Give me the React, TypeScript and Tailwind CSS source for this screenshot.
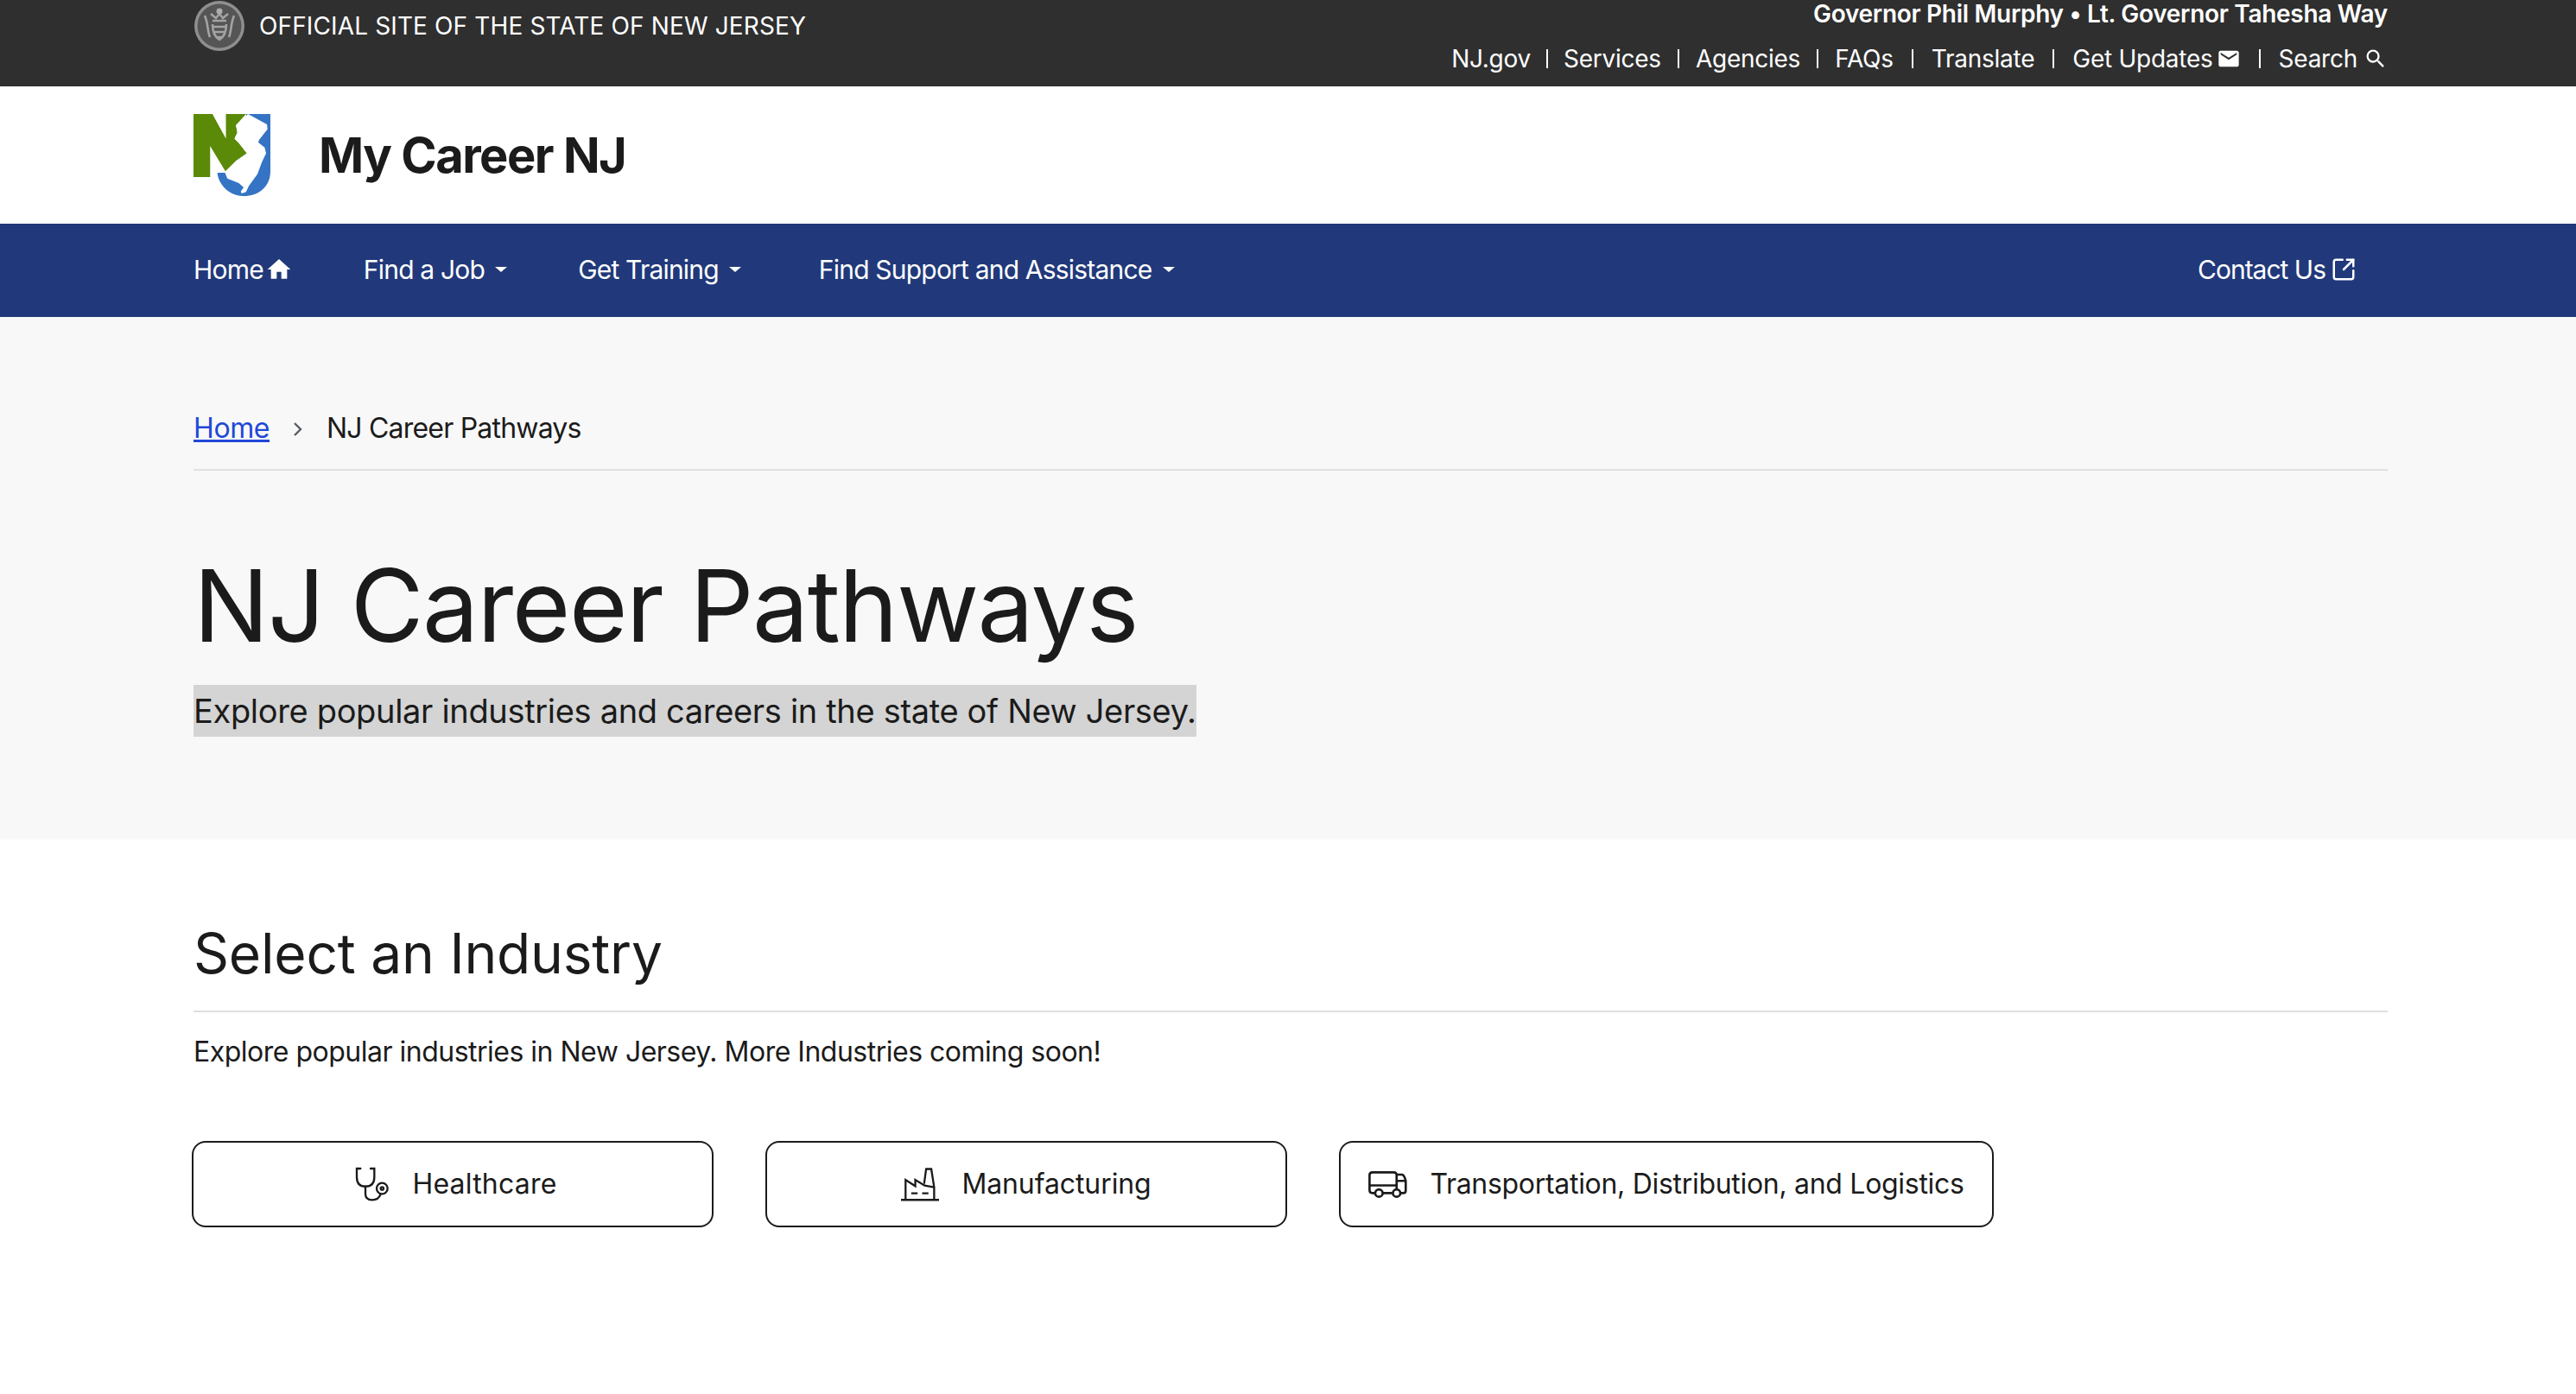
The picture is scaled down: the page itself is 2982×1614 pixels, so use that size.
import React from "react";
import { MdEmail, MdHome, MdSearch } from "react-icons/md";
import { LuSquareArrowOutUpRight } from "react-icons/lu";

const topLinks = [
  { label: "NJ.gov", sep: "mx-[18px]" },
  { label: "Services", sep: "mx-[19px]" },
  { label: "Agencies", sep: "mx-[19px]" },
  { label: "FAQs", sep: "mx-[21px]" },
  { label: "Translate", sep: "mx-[21px]" },
];

const Caret = () => (
  <span className="ml-[12px] inline-block w-0 h-0 border-x-[7px] border-x-transparent border-t-[6px] border-t-white" />
);

const Seal = () => (
  <svg viewBox="0 0 60 60" className="w-[60px] h-[60px] shrink-0">
    <defs>
      <filter id="soft">
        <feGaussianBlur stdDeviation="0.7" />
      </filter>
    </defs>
    <g filter="url(#soft)">
      <circle cx="30" cy="30" r="29" fill="#8f8f8f" />
      <circle cx="30" cy="30" r="25.5" fill="#555555" />
      <g fill="none" stroke="#a3a3a3" strokeWidth="2.6">
        <path d="M13 18c4 9 3 18 6 25M47 18c-4 9-3 18-6 25" />
        <path d="M20 16l6 5 4-5 4 5 6-5M22 24h16M23 31h14M23 37h14M26 43h8" />
        <path d="M22 28c0 10 3 15 8 18 5-3 8-8 8-18" />
      </g>
      <circle cx="30" cy="13" r="3.5" fill="#adadad" />
    </g>
  </svg>
);

const Logo = () => (
  <svg viewBox="42 37 268 277" preserveAspectRatio="none" className="w-[89px] h-[95px] shrink-0">
    <path d="M225 37H310V230C310 285 265 314 218 314C170 314 130 280 125 235H160L190 195L228 170Z" fill="#3574c4" />
    <path d="M42 37H108L155 120V37H225L190 75L195 100L185 120L200 135L228 170L190 195L153 230L100 145V250H42Z" fill="#5a8a08" />
    <path
      d="M232 37L298 72L300 88L270 125L268 133L290 150L295 170L280 200L265 240L235 280L225 300L210 305L207 298L217 285L200 270L160 255L152 235L190 195L228 170L200 135L185 120L195 100L190 75Z"
      fill="#ffffff"
    />
  </svg>
);

const Stethoscope = () => (
  <svg viewBox="36 50 120 120" fill="none" stroke="#1b1b1b" strokeWidth="7" strokeLinecap="round" className="w-[40px] h-[40px]">
    <path d="M55 56H42V85Q42 118 72 118Q103 118 103 85V56H90" />
    <path d="M72 118V143Q72 165 95 165Q118 165 125 144" />
    <circle cx="130" cy="125" r="19" />
    <circle cx="130" cy="125" r="5" />
  </svg>
);

const Factory = () => (
  <svg viewBox="42 48 133 117" fill="none" stroke="#1b1b1b" strokeWidth="7" className="w-[44px] h-[39px]">
    <path d="M42 160H175" strokeWidth="8" />
    <path d="M58 158V90L92 112V90L125 110L158 116" />
    <path d="M123 104L130 52H148L158 116V158" />
    <path d="M78 137H100M116 137H138" />
  </svg>
);

const Truck = () => (
  <svg viewBox="76 70 136 94" fill="none" stroke="#1b1b1b" strokeWidth="8" className="w-[45px] h-[31px]">
    <path d="M100 147H90Q80 147 80 137V84Q80 74 90 74H165Q175 74 175 84V135" />
    <path d="M175 82H195Q203 85 207 105V138Q207 147 198 147H190" />
    <path d="M80 120H175M175 104H207M127 147H160" />
    <circle cx="113" cy="147" r="13" fill="#ffffff" />
    <circle cx="175" cy="147" r="13" fill="#ffffff" />
  </svg>
);

const IndustryButton = ({ icon, label, className }: { icon: React.ReactNode; label: string; className: string }) => (
  <button className={"h-[100px] flex items-center justify-center gap-[26px] rounded-[16px] border-2 border-[#1b1b1b] bg-white text-[32px] text-[#1b1b1b] " + className}>
    {icon}
    <span>{label}</span>
  </button>
);

export default function App() {
  return (
    <div className="min-h-[1614px] bg-white text-[#1b1b1b] font-['Inter','Liberation_Sans',sans-serif]">
      <div className="h-[100px] bg-[#2f2f2f] text-white">
        <div className="ml-[224px] mr-[218px] flex justify-between">
          <div className="flex items-start gap-[16px]">
            <Seal />
            <span className="mt-[12px] text-[28px] leading-[36px] tracking-[0.13px]">OFFICIAL SITE OF THE STATE OF NEW JERSEY</span>
          </div>
          <div className="flex flex-col items-end">
            <div className="text-[28px] leading-[32px] font-semibold tracking-[-0.3px]">Governor Phil Murphy • Lt. Governor Tahesha Way</div>
            <div className="mt-[19px] flex items-center text-[28px] leading-[34px] tracking-[-0.25px]">
              {topLinks.map((link) => (
                <React.Fragment key={link.label}>
                  <span>{link.label}</span>
                  <span className={"w-[2px] h-[22px] bg-white " + link.sep} />
                </React.Fragment>
              ))}
              <span>Get Updates</span>
              <MdEmail className="ml-[4px] text-[28px]" />
              <span className="mx-[21px] w-[2px] h-[22px] bg-white" />
              <span>Search</span>
              <MdSearch className="ml-[7px] text-[28px]" />
            </div>
          </div>
        </div>
      </div>

      <div className="h-[159px] flex items-center gap-[56px] px-[224px]">
        <Logo />
        <span className="text-[56px] font-bold tracking-[-1.5px]">My Career NJ</span>
      </div>

      <nav className="h-[108px] bg-[#21397a] text-white text-[30px] tracking-[-0.8px] flex items-center justify-between pl-[224px] pr-[254px]">
        <div className="flex items-center gap-[82px] -mt-[2px]">
          <span className="flex items-center">Home<MdHome className="ml-[2px] text-[32px]" /></span>
          <span className="flex items-center">Find a Job<Caret /></span>
          <span className="flex items-center">Get Training<Caret /></span>
          <span className="ml-[8px] flex items-center">Find Support and Assistance<Caret /></span>
        </div>
        <span className="flex items-center -mt-[2px] tracking-[-1px]">Contact Us<LuSquareArrowOutUpRight className="ml-[6px] text-[30px]" /></span>
      </nav>

      <section className="h-[605px] bg-[#f8f8f8] pl-[224px] pr-[218px]">
        <div className="h-[178px] border-b-2 border-[#e0e0e0] pt-[109px] flex items-start text-[32px] leading-[40px]">
          <a className="text-[#2148d8] underline tracking-[-0.4px]">Home</a>
          <svg viewBox="0 0 12 18" fill="none" stroke="#565c65" strokeWidth="2.4" className="mx-[27px] mt-[12px] w-[12px] h-[18px]">
            <path d="M2 2l7 7-7 7" />
          </svg>
          <span className="tracking-[-0.8px]">NJ Career Pathways</span>
        </div>
        <h1 className="mt-[84px] text-[116px] leading-[144px] tracking-[-1.5px]">NJ Career Pathways</h1>
        <p className="mt-[20px] inline-block bg-[#d4d4d4] text-[38px] leading-[60px] tracking-[-0.33px]">
          Explore popular industries and careers in the state of New Jersey.
        </p>
      </section>

      <section className="pl-[224px] pr-[218px]">
        <h2 className="mt-[92px] text-[64px] leading-[80px] pb-[26px] tracking-[-0.2px] border-b-2 border-[#e0e0e0]">Select an Industry</h2>
        <p className="mt-[24px] text-[32px] leading-[44px] tracking-[-0.5px]">Explore popular industries in New Jersey. More Industries coming soon!</p>
        <div className="mt-[81px] -ml-[2px] flex gap-[60px]">
          <IndustryButton icon={<Stethoscope />} label="Healthcare" className="w-[604px] pl-[8px] tracking-[0.2px]" />
          <IndustryButton icon={<Factory />} label="Manufacturing" className="w-[604px] tracking-[-0.1px]" />
          <IndustryButton icon={<Truck />} label="Transportation, Distribution, and Logistics" className="w-[758px] tracking-[-0.3px]" />
        </div>
      </section>
    </div>
  );
}
